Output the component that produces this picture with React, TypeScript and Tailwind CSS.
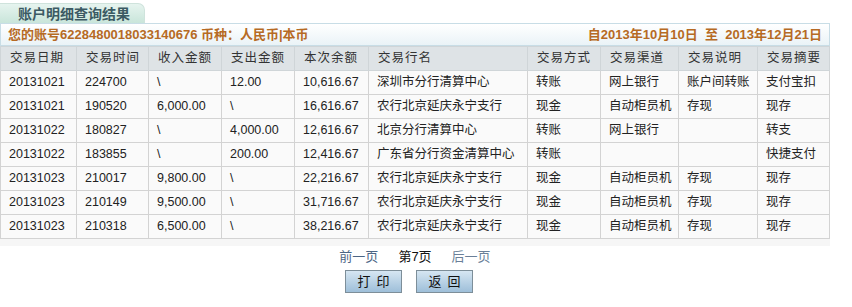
import React from 'react';

const cols = [
  { title: '交易日期', w: 'w-[76px]' },
  { title: '交易时间', w: 'w-[72px]' },
  { title: '收入金额', w: 'w-[73px]' },
  { title: '支出金额', w: 'w-[73px]' },
  { title: '本次余额', w: 'w-[74px]' },
  { title: '交易行名', w: 'w-[159px]' },
  { title: '交易方式', w: 'w-[73px]' },
  { title: '交易渠道', w: 'w-[78px]' },
  { title: '交易说明', w: 'w-[79px]' },
  { title: '交易摘要', w: 'w-[72px]' },
];

const rows = [
  ['20131021', '224700', '\\', '12.00', '10,616.67', '深圳市分行清算中心', '转账', '网上银行', '账户间转账', '支付宝扣'],
  ['20131021', '190520', '6,000.00', '\\', '16,616.67', '农行北京延庆永宁支行', '现金', '自动柜员机', '存现', '现存'],
  ['20131022', '180827', '\\', '4,000.00', '12,616.67', '北京分行清算中心', '转账', '网上银行', '', '转支'],
  ['20131022', '183855', '\\', '200.00', '12,416.67', '广东省分行资金清算中心', '转账', '', '', '快捷支付'],
  ['20131023', '210017', '9,800.00', '\\', '22,216.67', '农行北京延庆永宁支行', '现金', '自动柜员机', '存现', '现存'],
  ['20131023', '210149', '9,500.00', '\\', '31,716.67', '农行北京延庆永宁支行', '现金', '自动柜员机', '存现', '现存'],
  ['20131023', '210318', '6,500.00', '\\', '38,216.67', '农行北京延庆永宁支行', '现金', '自动柜员机', '存现', '现存'],
];

const font = "font-['Liberation_Sans','Noto_Sans_CJK_SC',sans-serif]";

export default function App() {
  return (
    <div className={`w-[852px] h-[307px] bg-white ${font} text-[13px] text-[#222]`}>
      <div className="w-[830px] pt-[3px]">
        {/* tab */}
        <div className="w-[145px] h-[20px] rounded-tr-[7px] bg-gradient-to-b from-[#e6f4ef] to-[#c9e5da] border-t border-r border-[#cfe3dc] text-[#3b5a63] text-[14px] font-bold leading-[20px] pl-[18px]">
          账户明细查询结果
        </div>

        {/* info bar */}
        <div className="h-[23px] flex items-center justify-between border border-[#c8dde6] bg-gradient-to-b from-[#ffffff] to-[#eaf3f7] px-[7px] text-[#b66a24] font-bold">
          <span>您的账号6228480018033140676 币种：人民币|本币</span>
          <span>自2013年10月10日&nbsp;&nbsp;至&nbsp;&nbsp;2013年12月21日</span>
        </div>

        <table className="w-[829px] border-collapse table-fixed">
          <thead>
            <tr className="h-[24px] bg-[#dee3e6] text-[#333]">
              {cols.map((c) => (
                <th key={c.title} className={`${c.w} border border-[#cfd5d8] text-left font-normal text-[12.5px] pl-[9px] tracking-[1px]`}>
                  {c.title}
                </th>
              ))}
            </tr>
          </thead>
          <tbody>
            {rows.map((r, i) => (
              <tr key={i} className="h-[24px] bg-[#fafafa] text-[12.5px]">
                {r.map((v, j) => (
                  <td key={j} className="border border-[#d3d3d3] pl-[8px] whitespace-nowrap">
                    {v}
                  </td>
                ))}
              </tr>
            ))}
          </tbody>
        </table>
        <div className="h-[7px] bg-[#f6f6f6]" />

        {/* pager */}
        <div className="flex justify-center items-center gap-[20px] h-[17px] mt-[2px]">
          <span className="text-[#4b6585]">前一页</span>
          <span className="text-[#111]">第7页</span>
          <span className="text-[#6a7f98]">后一页</span>
        </div>

        <div className="flex justify-center gap-[14px] mt-[5px] pr-[12px]">
          <button className="w-[57px] h-[23px] border border-[#7d8e99] bg-gradient-to-b from-[#d6e6f2] to-[#9ebfd9] text-[#111] tracking-[6px] pl-[6px] leading-[21px]">
            打印
          </button>
          <button className="w-[57px] h-[23px] border border-[#7d8e99] bg-gradient-to-b from-[#d6e6f2] to-[#9ebfd9] text-[#111] tracking-[6px] pl-[6px] leading-[21px]">
            返回
          </button>
        </div>
      </div>
    </div>
  );
}
